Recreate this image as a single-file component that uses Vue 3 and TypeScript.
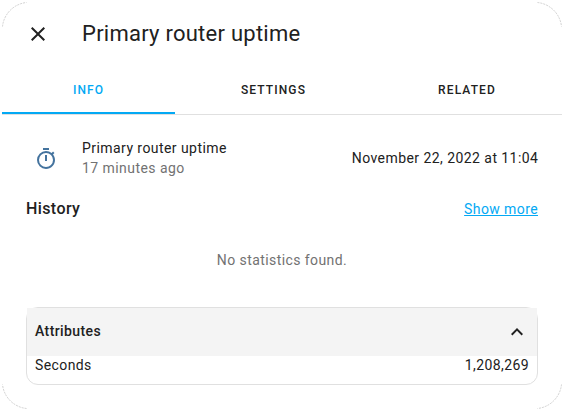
<script setup lang="ts">
import { ref } from 'vue'

const tabs: string[] = ['Info', 'Settings', 'Related']
const active = ref('Info')
</script>

<template>
  <main class="page">
    <section class="dialog">
      <header class="header">
        <svg class="close" viewBox="0 0 24 24"><path d="M19,6.41L17.59,5L12,10.59L6.41,5L5,6.41L10.59,12L5,17.59L6.41,19L12,13.41L17.59,19L19,17.59L13.41,12L19,6.41Z" /></svg>
        <h1>Primary router uptime</h1>
      </header>
      <nav class="tabs">
        <button v-for="tab in tabs" :key="tab" :class="['tab', tab.toLowerCase(), { active: active === tab }]" @click="active = tab">{{ tab }}</button>
      </nav>
      <div class="content">
        <div class="state">
          <svg class="timer" viewBox="0 0 24 24"><path d="M12,20A7,7 0 0,1 5,13A7,7 0 0,1 12,6A7,7 0 0,1 19,13A7,7 0 0,1 12,20M19.03,7.39L20.45,5.97C20,5.46 19.55,5 19.04,4.56L17.62,6C16.07,4.74 14.12,4 12,4A9,9 0 0,0 3,13A9,9 0 0,0 12,22C17,22 21,17.97 21,13C21,10.88 20.26,8.93 19.03,7.39M11,14H13V8H11M15,1H9V3H15V1Z" /></svg>
          <div class="names">
            <div class="name">Primary router uptime</div>
            <div class="ago">17 minutes ago</div>
          </div>
          <div class="value">November 22, 2022 at 11:04</div>
        </div>
        <div class="history"><h2>History</h2><a href="#">Show more</a></div>
        <div class="empty">No statistics found.</div>
        <section class="attributes">
          <div class="summary"><span>Attributes</span><svg viewBox="0 0 24 24"><path d="M7.41,15.41L12,10.83L16.59,15.41L18,14L12,8L6,14L7.41,15.41Z" /></svg></div>
          <div class="entry"><span>Seconds</span><span>1,208,269</span></div>
        </section>
      </div>
      <svg class="corners" viewBox="0 0 560 407">
        <path d="M.5 24.5A27 27 0 0 1 24.5 .5M535.5 .5A27 27 0 0 1 559.5 24.5M559.5 382.5A27 27 0 0 1 535.5 406.5M24.5 406.5A27 27 0 0 1 .5 382.5" />
      </svg>
    </section>
  </main>
</template>

<style>
body { background: #fff; }
</style>
<style scoped>
.page { box-sizing: border-box; height: 411px; padding: 2px; font-family: Roboto, sans-serif; color: #212121; overflow: hidden; }
.dialog { position: relative; height: 407px; background: #fff; }
.corners { position: absolute; inset: 0; width: 560px; height: 407px; fill: none; stroke: #c4c4c4; stroke-width: .8; stroke-dasharray: 2 1; pointer-events: none; }
.header { display: flex; align-items: center; height: 64px; padding-left: 24px; }
.close { width: 24px; height: 24px; fill: #212121; }
h1 { margin: 0 0 0 32px; font-size: 22px; line-height: 28px; font-weight: 400; letter-spacing: .25px; }
.tabs { display: flex; height: 49px; box-sizing: border-box; border-bottom: 1px solid #e0e0e0; }
.tab { box-sizing: border-box; height: 48px; padding: 2px 0 0; border: 0; border-bottom: 2px solid transparent; background: none; font: 500 12px/44px Roboto, sans-serif; letter-spacing: 1.1px; text-transform: uppercase; color: #212121; }
.info { width: 173px; }
.settings { width: 197px; }
.related { flex: 1; }
.active { color: #03a9f4; border-color: #03a9f4; }
.content { padding: 23px 24px 24px; }
.state { display: flex; align-items: center; height: 40px; font-size: 14px; line-height: 20px; letter-spacing: .44px; }
.timer { width: 24px; height: 24px; margin: 2px 24px 0 8px; fill: #44739e; }
.ago { color: #727272; }
.value { margin-left: auto; margin-right: -.4px; }
.history { display: flex; align-items: center; justify-content: space-between; height: 24px; margin-top: 19px; }
h2 { margin: 0; font-size: 16px; line-height: 24px; font-weight: 500; letter-spacing: .4px; }
a { color: #03a9f4; font-size: 14px; letter-spacing: .4px; }
.empty { height: 60px; margin-top: 9px; font-size: 14px; line-height: 60px; letter-spacing: .42px; text-align: center; color: #727272; }
.attributes { box-sizing: border-box; height: 78px; margin-top: 17px; border: 1px solid #e0e0e0; border-radius: 12px; font-size: 14px; letter-spacing: .4px; }
.summary { box-sizing: border-box; display: flex; align-items: center; justify-content: space-between; height: 48px; padding: 0 8px; background: #f4f4f4; font-weight: 500; }
.summary span { margin-top: -2px; }
.summary svg { width: 24px; height: 24px; fill: #212121; }
.entry { display: flex; justify-content: space-between; padding: 0 8px; line-height: 19px; }
</style>
